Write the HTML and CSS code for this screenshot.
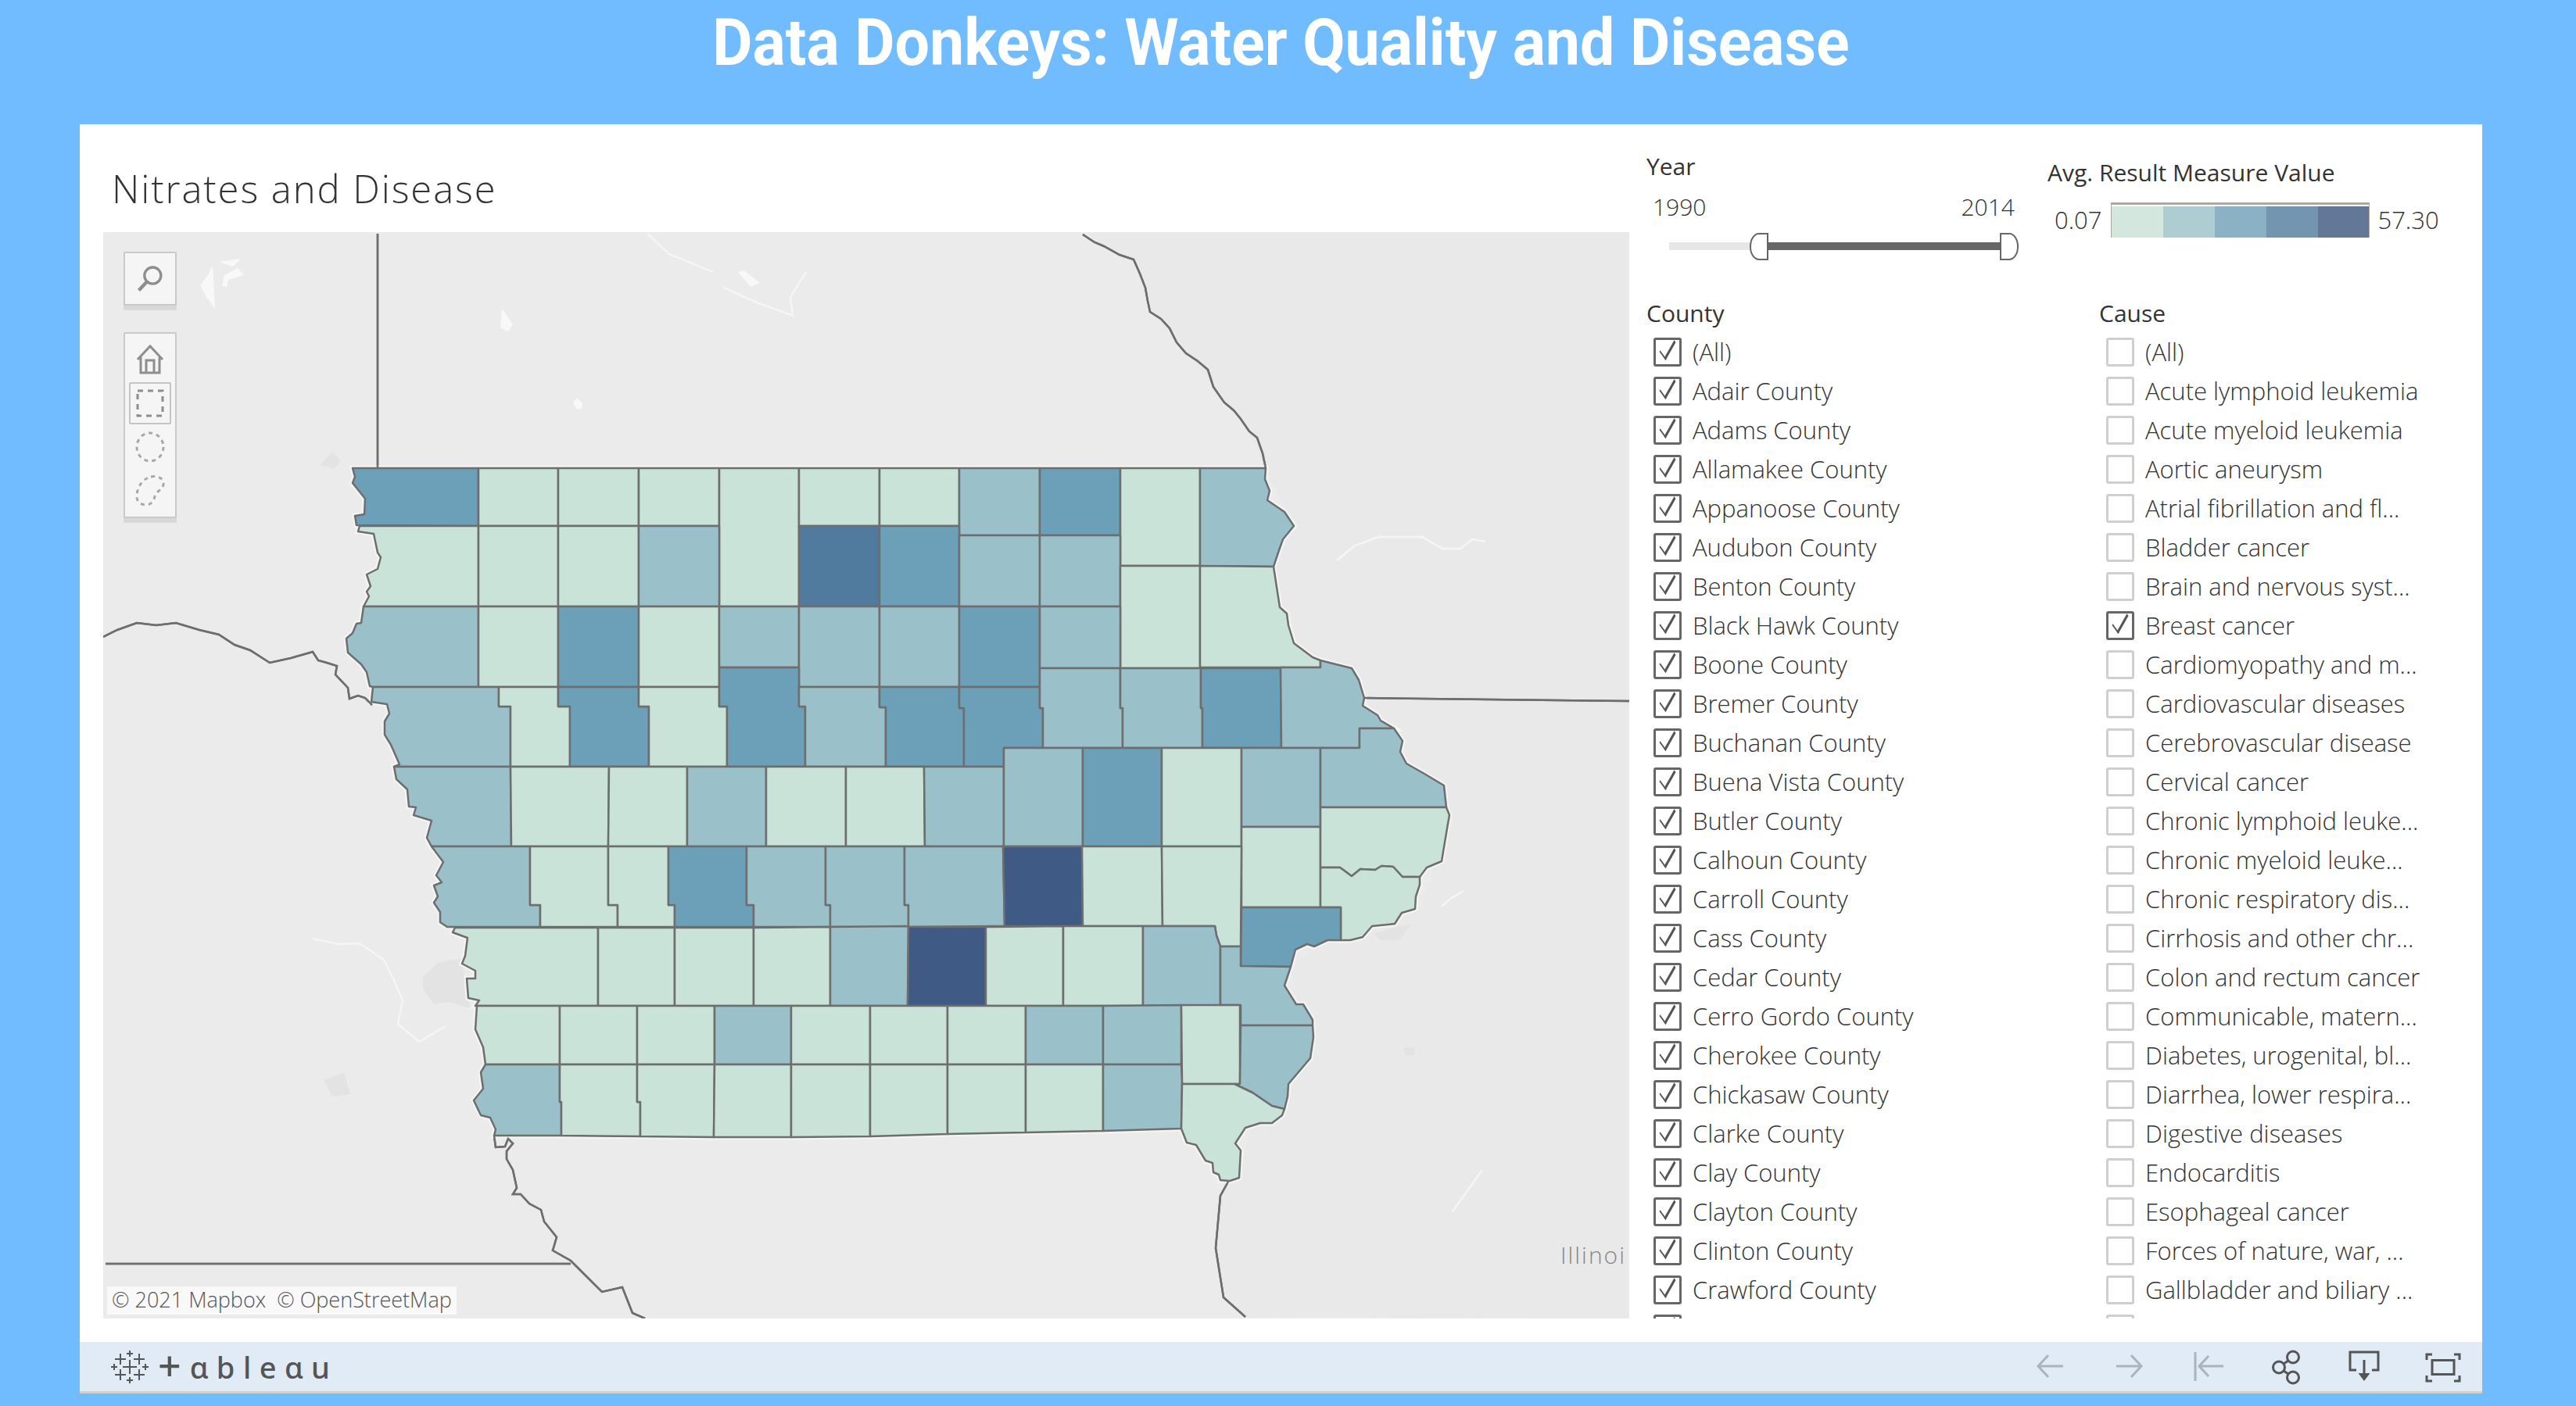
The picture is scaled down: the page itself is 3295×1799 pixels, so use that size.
FILE: index.html
```html
<!DOCTYPE html>
<html lang="en">
<head>
    <meta charset="UTF-8">
    <meta name="viewport" content="width=device-width, initial-scale=1.0">
    <title>Data Donkeys: Water Quality and Disease</title>
    <link rel="stylesheet" href="styles.css">
</head>
<body>
    <header class="site-header">
        <h1>Data Donkeys: Water Quality and Disease</h1>
    </header>

    <div class="viz">
        <main class="dash">
            <section class="sheet">
                <h2 class="sheet-title">Nitrates and Disease</h2>
                <div class="map">
                    <svg class="map-svg" viewBox="132 297 1952 1390" width="1952" height="1390">
                        <defs>
                            <g id="counties">
                                <!-- row 1 -->
                                <polygon class="c2" points="451,599 612,599 612,673 456,672 454,660 466,658 467,638 451,618 454,610"/>
                                <polygon class="c0" points="612,599 714,599 714,673 612,673"/>
                                <polygon class="c0" points="714,599 817,599 817,673 714,673"/>
                                <polygon class="c0" points="817,599 920,599 920,673 817,673"/>
                                <polygon class="c0" points="920,599 1022,599 1022,776 920,776"/>
                                <polygon class="c0" points="1022,599 1125,599 1125,673 1022,673"/>
                                <polygon class="c0" points="1125,599 1227,599 1227,673 1125,673"/>
                                <polygon class="c1" points="1227,599 1330,599 1330,685 1227,685"/>
                                <polygon class="c2" points="1330,599 1433,599 1433,685 1330,685"/>
                                <polygon class="c0" points="1433,599 1535,599 1535,724 1433,724"/>
                                <polygon class="c1" points="1535,599 1619,599 1618,613 1624,628 1621,640 1643,655 1655,673 1641,690 1635,707 1629,725 1535,724"/>
                                <!-- row 2 -->
                                <polygon class="c0" points="460,673 612,673 612,776 465,776 472,763 469,757 474,750 469,735 483,728 487,713 483,707 478,683 458,680"/>
                                <polygon class="c0" points="612,673 714,673 714,776 612,776"/>
                                <polygon class="c0" points="714,673 817,673 817,776 714,776"/>
                                <polygon class="c1" points="817,673 920,673 920,776 817,776"/>
                                <polygon class="c3" points="1022,673 1125,673 1125,776 1022,776"/>
                                <polygon class="c2" points="1125,673 1227,673 1227,776 1125,776"/>
                                <polygon class="c1" points="1227,685 1330,685 1330,776 1227,776"/>
                                <polygon class="c1" points="1330,685 1433,685 1433,776 1330,776"/>
                                <polygon class="c0" points="1433,724 1535,724 1535,855 1433,855"/>
                                <polygon class="c0" points="1535,724 1629,725 1637,777 1646,785 1648,800 1655,823 1679,841 1689,845 1689,854 1535,854"/>
                                <!-- row 3 -->
                                <polygon class="c1" points="465,776 612,776 612,879 477,879 473,878 469,860 462,850 445,835 443,817 451,810 456,798 462,797"/>
                                <polygon class="c0" points="612,776 714,776 714,879 612,879"/>
                                <polygon class="c2" points="714,776 817,776 817,879 714,879"/>
                                <polygon class="c0" points="817,776 920,776 920,879 817,879"/>
                                <polygon class="c1" points="920,776 1022,776 1022,854 920,854"/>
                                <polygon class="c1" points="1022,776 1125,776 1125,879 1022,879"/>
                                <polygon class="c1" points="1125,776 1227,776 1227,879 1125,879"/>
                                <polygon class="c2" points="1227,776 1330,776 1330,879 1227,879"/>
                                <polygon class="c1" points="1330,776 1433,776 1433,855 1330,855"/>
                                <!-- row 4 -->
                                <polygon class="c1" points="477,879 638,879 638,904 653,904 653,981 504,981 511,978 500,953 492,940 492,923 498,913 495,901 475,898"/>
                                <polygon class="c0" points="638,879 714,879 714,904 729,904 729,981 653,981 653,904 638,904"/>
                                <polygon class="c2" points="714,879 817,879 817,904 830,904 830,981 729,981 729,904 714,904"/>
                                <polygon class="c0" points="817,879 920,879 920,904 930,904 930,981 830,981 830,904 817,904"/>
                                <polygon class="c2" points="920,854 1022,854 1022,904 1030,904 1030,981 930,981 930,904 920,904"/>
                                <polygon class="c1" points="1022,879 1125,879 1125,905 1133,905 1133,981 1030,981 1030,904 1022,904"/>
                                <polygon class="c2" points="1125,879 1227,879 1227,906 1233,906 1233,981 1133,981 1133,905 1125,905"/>
                                <polygon class="c2" points="1227,879 1330,879 1330,906 1334,906 1334,957 1284,957 1284,981 1233,981 1233,906 1227,906"/>
                                <polygon class="c1" points="1330,855 1433,855 1433,906 1436,906 1436,957 1334,957 1334,906 1330,906"/>
                                <polygon class="c1" points="1433,855 1536,855 1536,906 1538,906 1538,957 1436,957 1436,906 1433,906"/>
                                <polygon class="c2" points="1536,855 1638,855 1639,957 1538,957 1538,906 1536,906"/>
                                <polygon class="c1" points="1638,854 1689,854 1689,845 1729,855 1738,870 1745,893 1743,903 1762,915 1766,922 1783,932 1739,932 1739,957 1639,957"/>
                                <!-- row 5 -->
                                <polygon class="c1" points="504,981 653,981 654,1083 552,1083 546,1072 552,1050 529,1043 532,1033 523,1032 521,1010 507,997"/>
                                <polygon class="c0" points="653,981 779,981 778,1083 654,1083"/>
                                <polygon class="c0" points="779,981 879,981 879,1083 778,1083"/>
                                <polygon class="c1" points="879,981 980,981 980,1083 879,1083"/>
                                <polygon class="c0" points="980,981 1082,981 1082,1083 980,1083"/>
                                <polygon class="c0" points="1082,981 1182,981 1183,1083 1082,1083"/>
                                <polygon class="c1" points="1182,981 1284,981 1284,1083 1183,1083"/>
                                <polygon class="c1" points="1284,957 1385,957 1385,1083 1284,1083"/>
                                <polygon class="c2" points="1385,957 1486,957 1486,1083 1385,1083"/>
                                <polygon class="c0" points="1486,957 1588,957 1588,1083 1486,1083"/>
                                <polygon class="c1" points="1588,957 1689,957 1689,1058 1588,1058"/>
                                <polygon class="c1" points="1689,957 1739,957 1739,932 1783,932 1794,948 1791,962 1799,977 1822,990 1847,1005 1850,1033 1689,1033"/>
                                <polygon class="c0" points="1588,1058 1689,1058 1689,1161 1588,1161"/>
                                <polygon class="c0" points="1689,1033 1850,1033 1854,1043 1851,1060 1844,1102 1825,1110 1816,1122 1794,1122 1782,1109 1767,1108 1759,1113 1740,1112 1729,1121 1714,1110 1689,1110"/>
                                <polygon class="c0" points="1689,1110 1714,1110 1729,1121 1740,1112 1759,1113 1767,1108 1782,1109 1794,1122 1816,1122 1816,1132 1811,1147 1810,1163 1793,1168 1784,1182 1755,1185 1743,1199 1727,1203 1715,1203 1715,1161 1689,1161"/>
                                <!-- row 6 -->
                                <polygon class="c1" points="552,1083 678,1083 678,1158 691,1158 691,1186 572,1186 563,1180 563,1167 555,1155 560,1147 555,1133 565,1129 558,1120 567,1103"/>
                                <polygon class="c0" points="678,1083 778,1083 778,1158 790,1158 790,1186 691,1186 691,1158 678,1158"/>
                                <polygon class="c0" points="778,1083 855,1083 855,1158 863,1158 863,1186 790,1186 790,1158 778,1158"/>
                                <polygon class="c2" points="855,1083 955,1083 955,1158 964,1158 964,1186 863,1186 863,1158 855,1158"/>
                                <polygon class="c1" points="955,1083 1056,1083 1056,1158 1062,1158 1062,1186 964,1186 964,1158 955,1158"/>
                                <polygon class="c1" points="1056,1083 1157,1083 1157,1158 1162,1158 1162,1186 1062,1186 1062,1158 1056,1158"/>
                                <polygon class="c1" points="1157,1083 1283,1083 1285,1185 1162,1186 1162,1158 1157,1158"/>
                                <polygon class="c4" points="1283,1083 1384,1083 1385,1185 1285,1185"/>
                                <polygon class="c0" points="1384,1083 1486,1083 1487,1185 1385,1185"/>
                                <polygon class="c0" points="1486,1083 1588,1083 1587,1211 1561,1211 1556,1197 1554,1185 1487,1185"/>
                                <polygon class="c2" points="1588,1161 1715,1161 1715,1203 1698,1203 1681,1211 1672,1208 1657,1215 1651,1237 1587,1236"/>
                                <!-- row 7 -->
                                <polygon class="c0" points="582,1187 765,1187 765,1287 608,1287 613,1280 599,1277 597,1252 608,1252 608,1242 591,1233 595,1223 598,1200 579,1193"/>
                                <polygon class="c0" points="765,1187 863,1187 863,1287 765,1287"/>
                                <polygon class="c0" points="863,1187 964,1187 964,1287 863,1287"/>
                                <polygon class="c0" points="964,1187 1062,1186 1062,1287 964,1287"/>
                                <polygon class="c1" points="1062,1186 1162,1185 1161,1287 1062,1287"/>
                                <polygon class="c4" points="1162,1186 1261,1186 1261,1287 1161,1287"/>
                                <polygon class="c0" points="1261,1186 1360,1185 1360,1287 1261,1287"/>
                                <polygon class="c0" points="1360,1185 1462,1185 1462,1287 1360,1287"/>
                                <polygon class="c1" points="1462,1185 1554,1185 1556,1197 1561,1211 1561,1286 1462,1287"/>
                                <polygon class="c1" points="1561,1211 1587,1211 1587,1236 1651,1237 1643,1261 1658,1285 1667,1285 1679,1305 1679,1312 1587,1312 1587,1286 1561,1286"/>
                                <!-- row 8 -->
                                <polygon class="c0" points="610,1287 716,1287 716,1362 621,1362 618,1340 608,1317"/>
                                <polygon class="c0" points="716,1287 815,1287 815,1362 716,1362"/>
                                <polygon class="c0" points="815,1287 914,1287 914,1362 815,1362"/>
                                <polygon class="c1" points="914,1287 1012,1287 1012,1362 914,1362"/>
                                <polygon class="c0" points="1012,1287 1113,1287 1113,1362 1012,1362"/>
                                <polygon class="c0" points="1113,1287 1212,1287 1212,1362 1113,1362"/>
                                <polygon class="c0" points="1212,1287 1312,1287 1312,1362 1212,1362"/>
                                <polygon class="c1" points="1312,1287 1411,1287 1411,1362 1312,1362"/>
                                <polygon class="c1" points="1411,1287 1511,1286 1511,1362 1411,1362"/>
                                <polygon class="c0" points="1511,1286 1586,1286 1586,1387 1512,1387"/>
                                <polygon class="c1" points="1587,1312 1679,1312 1680,1327 1676,1354 1648,1387 1647,1403 1643,1419 1627,1415 1602,1398 1579,1387 1586,1387"/>
                                <!-- row 9 -->
                                <polygon class="c1" points="621,1362 716,1362 716,1410 718,1410 718,1453 632,1453 634,1445 627,1430 615,1427 606,1408 618,1393 615,1372"/>
                                <polygon class="c0" points="716,1362 815,1362 815,1410 819,1410 819,1454 718,1453 718,1410 716,1410"/>
                                <polygon class="c0" points="815,1362 914,1362 913,1455 819,1454 819,1410 815,1410"/>
                                <polygon class="c0" points="914,1362 1012,1362 1012,1455 913,1455"/>
                                <polygon class="c0" points="1012,1362 1113,1362 1113,1454 1012,1455"/>
                                <polygon class="c0" points="1113,1362 1212,1362 1212,1451 1113,1454"/>
                                <polygon class="c0" points="1212,1362 1312,1362 1312,1449 1212,1451"/>
                                <polygon class="c0" points="1312,1362 1411,1362 1411,1447 1312,1449"/>
                                <polygon class="c1" points="1411,1362 1511,1362 1512,1387 1511,1444 1411,1447"/>
                                <polygon class="c0" points="1512,1387 1579,1387 1602,1398 1627,1415 1643,1419 1640,1427 1627,1437 1612,1437 1593,1443 1580,1463 1587,1472 1585,1507 1573,1511 1561,1510 1559,1503 1552,1500 1551,1488 1542,1485 1530,1465 1518,1462 1511,1444"/>
                            </g>
                        </defs>

                        <!-- faint terrain -->
                        <polygon class="shade" points="1385,297 2084,297 2084,1687 1593,1685 1565,1660 1555,1597 1561,1530 1585,1507 1600,1440 1650,1390 1680,1327 1660,1285 1651,1237 1700,1203 1815,1165 1852,1060 1850,1030 1800,980 1745,893 1690,845 1650,820 1630,725 1655,673 1620,600 1587,536 1517,452 1471,399 1450,332"/>
                        <polygon class="blob" points="541,1250 560,1232 590,1226 601,1290 575,1282 555,1285 541,1265"/>
                        <polygon class="blob" points="414,1382 440,1372 448,1400 425,1403"/>
                        <polygon class="blob" points="409,595 425,578 436,590 428,600"/>
                        <polygon class="blob" points="1757,1195 1790,1185 1805,1183 1790,1203 1765,1203"/>
                        <polygon class="blob" points="1796,1340 1810,1340 1808,1350 1798,1350"/>

                        <!-- water -->
                        <polygon class="lake" points="256,365 266,352 272,340 275,395 264,380"/>
                        <polygon class="lake" points="280,335 308,331 298,341"/>
                        <polygon class="lake" points="284,366 287,352 304,343 312,352 292,358 290,367"/>
                        <polygon class="lake" points="944,348 952,346 972,362 960,367"/>
                        <polygon class="lake" points="642,395 656,415 650,424 640,420"/>
                        <polygon class="lake" points="733,515 738,509 745,516 744,523 737,523"/>
                        <polyline class="river" points="828,299 856,325 912,348"/>
                        <polyline class="river" points="926,368 970,388 996,397 1014,404 1011,380 1031,348"/>
                        <polyline class="river" points="1710,717 1733,698 1763,687 1819,687 1845,702 1868,702 1883,690 1900,693"/>
                        <polyline class="river" points="400,1201 433,1208 460,1207 491,1228 503,1252 515,1280 509,1310 536,1333 570,1313"/>
                        <polyline class="river" points="1844,1160 1855,1150 1872,1140"/>
                        <polyline class="river" points="1896,1497 1858,1550"/>

                        <!-- state lines outside Iowa -->
                        <g class="lines-halo">
                            <use href="#state-lines"/>
                            <use href="#counties"/>
                        </g>
                        <g id="state-lines" class="lines">
                            <polyline points="483,299 483,599"/>
                            <polyline points="1385,300 1400,310 1412,315 1432,326 1450,332 1458,350 1465,368 1468,385 1471,399 1485,408 1496,420 1505,438 1517,452 1532,462 1545,473 1552,495 1566,515 1578,525 1587,536 1598,552 1608,560 1615,580 1619,599"/>
                            <polyline points="1745,893 2084,897"/>
                            <polyline points="132,815 150,806 175,797 200,800 225,797 255,806 280,812 300,825 320,832 345,848 372,842 400,834 407,845 418,848 431,852 429,863 445,880 447,894 458,890 467,893 476,902"/>
                            <polyline points="632,1453 634,1468 646,1467 650,1457 656,1463 648,1473 648,1483 656,1497 661,1520 656,1528 666,1528 677,1540 692,1548 696,1563 712,1583 707,1600 730,1613 750,1633 770,1653 796,1647 809,1680 825,1687"/>
                            <polyline points="135,1617 730,1617"/>
                            <polyline points="1571,1512 1561,1530 1555,1597 1565,1660 1593,1685"/>
                        </g>
                        <g class="county-lines">
                            <use href="#counties"/>
                        </g>
                    </svg>

                    <div class="map-search">
                        <svg width="40" height="40" viewBox="0 0 36 36">
                            <circle cx="21" cy="14" r="9.500"/>
                            <path d="M14.500 21 L5 31" class="heavy"/>
                        </svg>
                    </div>
                    <div class="map-tools">
                        <div class="tool">
                            <svg width="38" height="40" viewBox="0 0 38 40">
                                <path d="M3 20 L19 3 L35 20 M7 17 V37 H31 V17 M14 37 V21 H24 V37"/>
                            </svg>
                        </div>
                        <div class="tool tool-on">
                            <svg width="36" height="36" viewBox="0 0 36 36">
                                <rect x="2" y="2" width="32" height="32" class="dash-line"/>
                            </svg>
                        </div>
                        <div class="tool">
                            <svg width="38" height="40" viewBox="0 0 38 40">
                                <ellipse cx="19" cy="20" rx="17" ry="18" class="dash-line dash-soft"/>
                            </svg>
                        </div>
                        <div class="tool">
                            <svg width="38" height="40" viewBox="0 0 38 40">
                                <path d="M20 2 C30 0 37 5 36 12 C35 19 27 20 25 27 C24 33 20 38 14 38 C6 38 1 33 2 25 C3 15 9 5 20 2 Z" class="dash-line dash-soft"/>
                            </svg>
                        </div>
                    </div>

                    <span class="map-label">Illinoi</span>
                    <span class="attribution">© 2021 Mapbox&nbsp; © OpenStreetMap</span>
                </div>
            </section>

            <aside class="side">
                <div class="side-top">
                    <div class="year">
                        <div class="side-title">Year</div>
                        <div class="year-range">
                            <span>1990</span>
                            <span>2014</span>
                        </div>
                        <div class="slider">
                            <div class="track-off"></div>
                            <div class="thumb thumb-left"></div>
                            <div class="track-on"></div>
                            <div class="thumb thumb-right"></div>
                        </div>
                    </div>
                    <div class="legend">
                        <div class="side-title">Avg. Result Measure Value</div>
                        <div class="legend-row">
                            <span>0.07</span>
                            <div class="legend-bar">
                                <i class="step s0"></i><i class="step s1"></i><i class="step s2"></i><i class="step s3"></i><i class="step s4"></i>
                            </div>
                            <span>57.30</span>
                        </div>
                    </div>
                </div>

                <div class="filters">
                    <div class="filter filter-county">
                        <div class="side-title">County</div>
                        <ul class="check-list">
                            <li><span class="box on"></span>(All)</li>
                            <li><span class="box on"></span>Adair County</li>
                            <li><span class="box on"></span>Adams County</li>
                            <li><span class="box on"></span>Allamakee County</li>
                            <li><span class="box on"></span>Appanoose County</li>
                            <li><span class="box on"></span>Audubon County</li>
                            <li><span class="box on"></span>Benton County</li>
                            <li><span class="box on"></span>Black Hawk County</li>
                            <li><span class="box on"></span>Boone County</li>
                            <li><span class="box on"></span>Bremer County</li>
                            <li><span class="box on"></span>Buchanan County</li>
                            <li><span class="box on"></span>Buena Vista County</li>
                            <li><span class="box on"></span>Butler County</li>
                            <li><span class="box on"></span>Calhoun County</li>
                            <li><span class="box on"></span>Carroll County</li>
                            <li><span class="box on"></span>Cass County</li>
                            <li><span class="box on"></span>Cedar County</li>
                            <li><span class="box on"></span>Cerro Gordo County</li>
                            <li><span class="box on"></span>Cherokee County</li>
                            <li><span class="box on"></span>Chickasaw County</li>
                            <li><span class="box on"></span>Clarke County</li>
                            <li><span class="box on"></span>Clay County</li>
                            <li><span class="box on"></span>Clayton County</li>
                            <li><span class="box on"></span>Clinton County</li>
                            <li><span class="box on"></span>Crawford County</li>
                            <li><span class="box on"></span></li>
                        </ul>
                    </div>
                    <div class="filter filter-cause">
                        <div class="side-title">Cause</div>
                        <ul class="check-list">
                            <li><span class="box"></span>(All)</li>
                            <li><span class="box"></span>Acute lymphoid leukemia</li>
                            <li><span class="box"></span>Acute myeloid leukemia</li>
                            <li><span class="box"></span>Aortic aneurysm</li>
                            <li><span class="box"></span>Atrial fibrillation and fl...</li>
                            <li><span class="box"></span>Bladder cancer</li>
                            <li><span class="box"></span>Brain and nervous syst...</li>
                            <li><span class="box on"></span>Breast cancer</li>
                            <li><span class="box"></span>Cardiomyopathy and m...</li>
                            <li><span class="box"></span>Cardiovascular diseases</li>
                            <li><span class="box"></span>Cerebrovascular disease</li>
                            <li><span class="box"></span>Cervical cancer</li>
                            <li><span class="box"></span>Chronic lymphoid leuke...</li>
                            <li><span class="box"></span>Chronic myeloid leuke...</li>
                            <li><span class="box"></span>Chronic respiratory dis...</li>
                            <li><span class="box"></span>Cirrhosis and other chr...</li>
                            <li><span class="box"></span>Colon and rectum cancer</li>
                            <li><span class="box"></span>Communicable, matern...</li>
                            <li><span class="box"></span>Diabetes, urogenital, bl...</li>
                            <li><span class="box"></span>Diarrhea, lower respira...</li>
                            <li><span class="box"></span>Digestive diseases</li>
                            <li><span class="box"></span>Endocarditis</li>
                            <li><span class="box"></span>Esophageal cancer</li>
                            <li><span class="box"></span>Forces of nature, war, ...</li>
                            <li><span class="box"></span>Gallbladder and biliary ...</li>
                            <li><span class="box"></span></li>
                        </ul>
                    </div>
                </div>
            </aside>
        </main>

        <footer class="toolbar">
            <div class="brand">
                <svg class="brand-mark" width="46" height="42" viewBox="0 0 46 42">
                    <path d="M23 12 V30 M14 21 H32 M23 0 V8 M19 4 H27 M23 34 V42 M19 38 H27 M3 17 V25 M-1 21 H7 M43 17 V25 M39 21 H47 M11 4 V18 M4 11 H18 M35 4 V18 M28 11 H42 M11 24 V38 M4 31 H18 M35 24 V38 M28 31 H42"/>
                </svg>
                <span class="brand-name"><span class="brand-t">+</span>ɑbleɑu</span>
            </div>
            <div class="actions">
                <svg class="icon off" width="46" height="46" viewBox="0 0 46 46"><path d="M39 22 H7 M20 8 L7 22 L20 36"/></svg>
                <svg class="icon off" width="46" height="46" viewBox="0 0 46 46"><path d="M7 22 H39 M26 8 L39 22 L26 36"/></svg>
                <svg class="icon off" width="46" height="46" viewBox="0 0 46 46"><path d="M7 4 V41 M43 22 H12 M24 9 L12 22 L24 35"/></svg>
                <svg class="icon" width="46" height="46" viewBox="0 0 46 46">
                    <circle cx="32" cy="10.500" r="7.500"/>
                    <circle cx="14" cy="23.500" r="7.500"/>
                    <circle cx="32" cy="36.500" r="7.500"/>
                    <path d="M20 19 L26 15 M20 28 L26 32"/>
                </svg>
                <svg class="icon" width="46" height="46" viewBox="0 0 46 46">
                    <path d="M12 27 H4 V4 H40 V27 H32 M22 14 V33"/>
                    <polygon class="solid" points="14.500,31 29.500,31 22,41"/>
                </svg>
                <svg class="icon" width="46" height="46" viewBox="0 0 46 46">
                    <path d="M9 7 H2 V14 M37 7 H44 V14 M2 34 V41 H9 M44 34 V41 H37"/>
                    <rect x="9" y="14.500" width="28" height="18"/>
                </svg>
            </div>
        </footer>
    </div>
</body>
</html>
```

FILE: styles.css
```css
html, body {
    margin: 0;
    padding: 0;
}

html {
    height: 1799px;
    overflow: hidden;
}

body {
    width: 3295px;
    height: 1799px;
    overflow: hidden;
    background-color: #70bcfe;
    font-family: "Open Sans", "Noto Sans", sans-serif;
    font-weight: 300;
    color: #333;
}

.site-header {
    height: 159px;
    padding-right: 18px;
    box-sizing: border-box;
    overflow: hidden;
    text-align: center;
}

.site-header h1 {
    display: inline-block;
    margin: 0;
    font-family: Roboto, sans-serif;
    font-size: 83px;
    font-weight: 700;
    line-height: 110px;
    color: white;
    transform: scaleX(0.95);
}

.viz {
    width: 3073px;
    margin-left: 102px;
}

.dash {
    display: flex;
    height: 1558px;
    background-color: white;
}

.sheet {
    width: 1952px;
    padding-left: 30px;
}

.sheet-title {
    height: 138px;
    margin: 0;
    padding-left: 11px;
    box-sizing: border-box;
    padding-top: 49px;
    font-size: 49px;
    font-weight: 300;
    line-height: 66px;
    letter-spacing: 1.900px;
}

.map {
    position: relative;
    width: 1952px;
    height: 1390px;
    overflow: hidden;
    background-color: #ebebeb;
}

.map-svg {
    display: block;
}

.map-svg .shade { fill: #e9e9e9; }
.map-svg .blob { fill: #e3e3e3; }
.map-svg .lake { fill: #f8f8f8; }

.map-svg .river {
    fill: none;
    stroke: #f5f5f5;
    stroke-width: 2.500;
}

.map-svg .c0 { fill: #c9e3d9; }
.map-svg .c1 { fill: #9ac0ca; }
.map-svg .c2 { fill: #6c9fb8; }
.map-svg .c3 { fill: #517a9f; }
.map-svg .c4 { fill: #3e5a85; }

.lines polyline {
    fill: none;
    stroke: #6e6e6e;
    stroke-width: 2.500;
}

.lines-halo {
    fill: none;
    stroke: #f4f4f4;
    stroke-width: 7;
}

.county-lines {
    stroke: #6e6e6e;
    stroke-width: 2.500;
    stroke-linejoin: round;
}

.map-search,
.map-tools {
    position: absolute;
    left: 26px;
    width: 68px;
    box-sizing: border-box;
    background-color: #f5f5f5;
    border: 2px solid #c9c9c9;
    border-radius: 2px;
    box-shadow: 0 6px 0 #d8d8d8;
}

.map-search {
    top: 25px;
    height: 69px;
    display: flex;
    align-items: center;
    justify-content: center;
}

.map-tools {
    top: 128px;
    height: 238px;
    display: flex;
    flex-direction: column;
    align-items: center;
    padding: 6px 0 0;
}

.tool {
    width: 54px;
    height: 54px;
    box-sizing: border-box;
    display: flex;
    align-items: center;
    justify-content: center;
    margin-bottom: 2px;
}

.tool-on {
    border: 2px solid #c4c4c4;
    border-radius: 2px;
}

.map-search svg,
.tool svg {
    fill: none;
    stroke: #8e8e8e;
    stroke-width: 3;
}

.map-search .heavy {
    stroke-width: 4;
}

.tool .dash-line {
    stroke-dasharray: 7 6;
}

.tool .dash-soft {
    stroke: #a8a8a8;
    stroke-dasharray: 5 5;
}

.map-label {
    position: absolute;
    left: 1864px;
    top: 1288px;
    font-size: 30px;
    letter-spacing: 2px;
    color: #858585;
}

.attribution {
    position: absolute;
    left: 5px;
    bottom: 5px;
    height: 36px;
    padding: 0 6px;
    background-color: #f9f9f9;
    font-size: 27px;
    line-height: 34px;
    color: #555;
    white-space: nowrap;
}

.side {
    flex: 1;
    padding-left: 22px;
}

.side-title {
    font-size: 30px;
    font-weight: 400;
    line-height: 42px;
    color: #333;
}

.side-top {
    display: flex;
    height: 221px;
}

.year {
    width: 513px;
    padding-top: 33px;
}

.year-range {
    display: flex;
    justify-content: space-between;
    width: 463px;
    margin: 10px 0 0 8px;
    font-size: 30px;
    line-height: 42px;
}

.slider {
    display: flex;
    align-items: center;
    height: 36px;
    margin: 11px 0 0 29px;
}

.track-off {
    width: 103px;
    height: 10px;
    background-color: #e6e6e6;
}

.track-on {
    width: 296px;
    height: 10px;
    background-color: #666;
}

.thumb {
    width: 24px;
    height: 35px;
    box-sizing: border-box;
    background-color: white;
    border: 2px solid #666;
}

.thumb-left {
    border-radius: 12px 0 0 12px / 17px 0 0 17px;
}

.thumb-right {
    border-radius: 0 12px 12px 0 / 0 17px 17px 0;
}

.legend {
    padding-top: 41px;
}

.legend-row {
    display: flex;
    align-items: center;
    margin: 17px 0 0 9px;
    font-size: 31px;
    line-height: 45px;
}

.legend-bar {
    display: flex;
    width: 331px;
    height: 45px;
    box-sizing: border-box;
    margin: 0 10px 0 12px;
    border-top: 3px solid #aca89c;
    border-left: 1px solid #aca89c;
    border-right: 1px solid #aca89c;
}

.step {
    flex: 1;
    margin-top: 2px;
}

.s0 { background-color: #d3e7df; }
.s1 { background-color: #aecdd3; }
.s2 { background-color: #8ab1c4; }
.s3 { background-color: #7495b0; }
.s4 { background-color: #637896; }

.filters {
    display: flex;
    height: 1307px;
    overflow: hidden;
}

.filter-county {
    width: 579px;
}

.filter-cause {
    flex: 1;
}

.side-title + .check-list {
    margin-top: 3px;
}

.check-list {
    list-style: none;
    margin: 0;
    padding: 0 0 0 9px;
}

.check-list li {
    display: flex;
    align-items: center;
    height: 50px;
    font-size: 31px;
    white-space: nowrap;
    color: #333;
}

.box {
    position: relative;
    flex: none;
    width: 36px;
    height: 37px;
    box-sizing: border-box;
    margin-right: 14px;
    border: 3px solid #cfcfcf;
    border-radius: 3px;
}

.box.on {
    border-color: #666;
}

/* tick: short left stroke, long right stroke */
.box.on::after {
    content: "";
    position: absolute;
    left: 11px;
    top: -4px;
    width: 8px;
    height: 26px;
    box-sizing: border-box;
    border-right: 2px solid #555;
    border-bottom: 2px solid #555;
    transform: matrix(1, 1.375, -0.5, 0.885, 0, 0);
}

.toolbar {
    display: flex;
    align-items: center;
    justify-content: space-between;
    height: 66px;
    box-sizing: border-box;
    padding: 0 27px 0 41px;
    background-color: #e1ebf5;
    border-bottom: 3px solid #d0d0d0;
}

.brand {
    display: flex;
    align-items: center;
}

.brand-mark {
    overflow: visible;
    fill: none;
    stroke: #555;
    stroke-width: 2;
}

.brand-name {
    margin-left: 13px;
    font-family: "Noto Sans", sans-serif;
    font-size: 38px;
    font-weight: 500;
    letter-spacing: 10.500px;
    line-height: 50px;
    color: #555;
}

.brand-t {
    font-size: 52px;
    line-height: 40px;
    vertical-align: -3px;
    letter-spacing: 11px;
}

.actions {
    display: flex;
    gap: 54.500px;
}

.icon {
    fill: none;
    stroke: #555;
    stroke-width: 3;
}

.icon.off {
    stroke: #a9b4bd;
}

.icon .solid {
    fill: #555;
    stroke: none;
}
```
